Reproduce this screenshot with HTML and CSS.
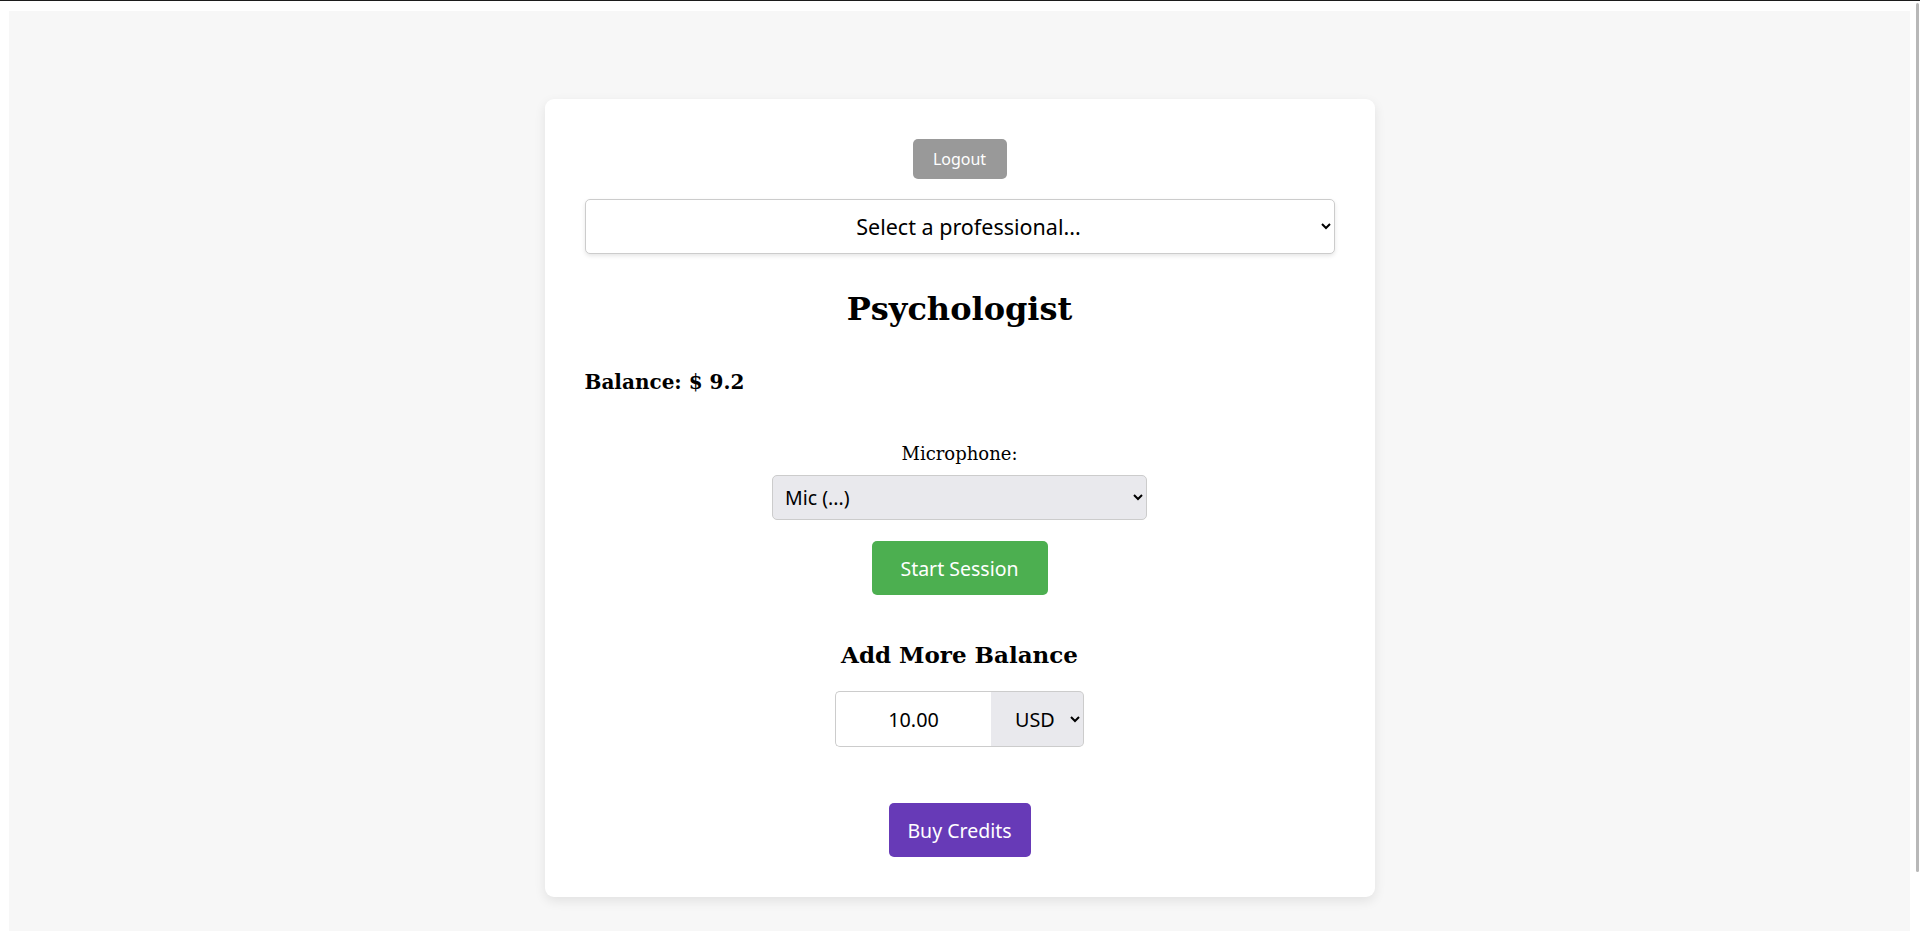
FILE: index.html
```html
<!DOCTYPE html>
<html lang="en">
  <head>
    <meta charset="UTF-8" />
    <meta name="viewport" content="width=device-width, initial-scale=1.0" />
    <title>Psychologist</title>
    <link rel="stylesheet" href="styles.css">
  </head>
  <body>
    <div class="page">
      <div class="card">
        <button id="logoutButton" class="logout-button">Logout</button>

        <select id="professionalSelect" class="professional-select">
          <option>Select a professional...</option>
        </select>

        <h1 class="title">Psychologist</h1>
        <h3 class="balance">Balance: $ 9.2</h3>

        <div class="mic-group">
          <label for="micSelect" class="mic-label">Microphone:</label>
          <select id="micSelect" class="mic-select">
            <option>Mic (...)</option>
          </select>
        </div>

        <button id="startButton" class="start-button">Start Session</button>

        <h2 class="add-title">Add More Balance</h2>
        <div class="amount-group">
          <input id="amountInput" class="amount-input" type="text" value="10.00" />
          <select id="currencySelect" class="currency-select">
            <option>USD</option>
          </select>
        </div>

        <button id="buyButton" class="buy-button">Buy Credits</button>
      </div>
    </div>
    <div class="scroll-thumb"></div>
  </body>
</html>
```

FILE: styles.css
```css
html {
  height: 100%;
  overflow: hidden;
  border-top: 1px solid #1c1c1c;
  background: #fff;
}
body {
  margin: 10px 10px 0 9px;
  font-family: "DejaVu Serif", serif;
  color: #000;
}
.page {
  background-color: #f7f7f7;
  height: calc(100vh - 11px);
  padding-top: 88px;
  box-sizing: border-box;
}
.card {
  width: 830px;
  margin: 0 auto;
  padding: 40px;
  box-sizing: border-box;
  background-color: #fff;
  border-radius: 9px;
  box-shadow: 0 4px 12px rgba(0, 0, 0, 0.09);
  display: flex;
  flex-direction: column;
  align-items: center;
}

/* ボタン共通 */
.logout-button,
.start-button,
.buy-button {
  font-family: "Noto Sans", sans-serif;
  color: #fff;
  border: none;
  border-radius: 5px;
  cursor: pointer;
}
.logout-button {
  width: 94px;
  height: 40px;
  font-size: 16px;
  background-color: #999;
}
.start-button {
  width: 176px;
  height: 54px;
  margin-top: 21px;
  font-size: 19.5px;
  background-color: #4caf50;
}
.buy-button {
  width: 142px;
  height: 54px;
  margin-top: 56px;
  font-size: 19.5px;
  background-color: #673ab7;
}

.professional-select {
  width: 100%;
  height: 55px;
  margin-top: 20px;
  padding: 0 10px 0 40px;
  font-family: "Noto Sans", sans-serif;
  font-size: 21.5px;
  text-align: center;
  color: #000;
  background-color: #fff;
  border: 1px solid #ccc;
  border-radius: 5px;
  box-shadow: 0 2px 4px rgba(0, 0, 0, 0.1);
}

.title {
  margin: 35px 0 0;
  font-size: 32px;
  line-height: 40px;
}
.balance {
  align-self: flex-start;
  margin: 41px 0 0;
  font-size: 20px;
  line-height: 24px;
}

.mic-group {
  display: flex;
  flex-direction: column;
  align-items: center;
  margin-top: 49px;
}
.mic-label {
  font-size: 18px;
  line-height: 22px;
}
.mic-select {
  width: 375px;
  height: 45px;
  margin-top: 10px;
  padding: 0 8px;
  font-family: "Noto Sans", sans-serif;
  font-size: 19.5px;
  color: #000;
  background-color: #e9e9ed;
  border: 1px solid #ccc;
  border-radius: 5px;
}

.add-title {
  margin: 45px 0 0;
  font-size: 23px;
  line-height: 29px;
}
.amount-group {
  display: flex;
  margin-top: 22px;
  height: 56px;
}
.amount-input {
  width: 156px;
  box-sizing: border-box;
  font-family: "Noto Sans", sans-serif;
  font-size: 19.8px;
  text-align: center;
  border: 1px solid #ccc;
  border-right: none;
  border-radius: 5px 0 0 5px;
  outline: none;
}
.currency-select {
  width: 93px;
  padding: 0 4px 0 20px;
  font-family: "Noto Sans", sans-serif;
  font-size: 19.8px;
  color: #000;
  background-color: #e9e9ed;
  border: 1px solid #ccc;
  border-left: none;
  border-radius: 0 5px 5px 0;
}

.scroll-thumb {
  position: fixed;
  top: 3px;
  right: 1px;
  width: 3px;
  height: 869px;
  border-radius: 2px;
  background-color: #b8b8b8;
}
```
